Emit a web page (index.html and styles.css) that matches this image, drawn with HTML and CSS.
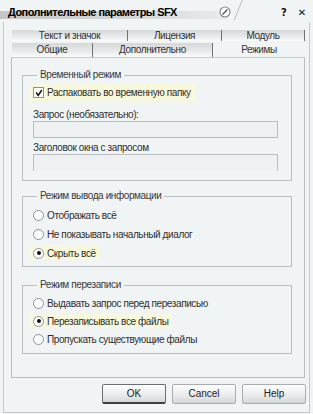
FILE: index.html
```html
<!DOCTYPE html>
<html lang="ru">
<head>
    <meta charset="UTF-8">
    <title>Дополнительные параметры SFX</title>
    <link rel="stylesheet" href="styles.css">
</head>
<body>
    <div class="dialog">
        <div class="titlebar">
            <div class="title">Дополнительные параметры SFX</div>
            <svg class="pin" width="14" height="14" viewBox="0 0 14 14">
                <circle cx="7" cy="7" r="5" fill="#fff" stroke="#8a8a8a" stroke-width="1.2"/>
                <path d="M4.6 9.4 L9.4 4.6" stroke="#555" stroke-width="1.4"/>
            </svg>
            <div class="slash"></div>
            <div class="ctl help">?</div>
            <div class="ctl close">&#x2715;</div>
        </div>

        <div class="frame">
            <div class="tabs">
                <div class="tabrow">
                    <div class="tab" style="width:116px">Текст и значок</div>
                    <div class="tab" style="width:94px">Лицензия</div>
                    <div class="tab" style="width:83px">Модуль</div>
                </div>
                <div class="tabrow">
                    <div class="tab" style="width:81px">Общие</div>
                    <div class="tab" style="width:120px">Дополнительно</div>
                    <div class="tab active" style="width:92px">Режимы</div>
                </div>
            </div>

            <div class="panel">
                <fieldset class="group g1">
                    <legend>Временный режим</legend>
                    <div class="option check-row hl">
                        <span class="check"><svg width="8" height="8" viewBox="0 0 8 8"><path d="M1.2 3.5 L3.2 6.5 L6.8 1" fill="none" stroke="#111" stroke-width="1.5"/></svg></span>
                        Распаковать во временную папку
                    </div>
                    <div class="label first">Запрос (необязательно):</div>
                    <div class="input"></div>
                    <div class="label">Заголовок окна с запросом</div>
                    <div class="input last"></div>
                </fieldset>

                <fieldset class="group g2">
                    <legend>Режим вывода информации</legend>
                    <div class="option"><span class="radio"></span>Отображать всё</div>
                    <div class="option"><span class="radio"></span>Не показывать начальный диалог</div>
                    <div class="option hl"><span class="radio on"></span>Скрыть всё</div>
                </fieldset>

                <fieldset class="group g3">
                    <legend>Режим перезаписи</legend>
                    <div class="option"><span class="radio"></span>Выдавать запрос перед перезаписью</div>
                    <div class="option hl"><span class="radio on"></span>Перезаписывать все файлы</div>
                    <div class="option"><span class="radio"></span>Пропускать существующие файлы</div>
                </fieldset>
            </div>

            <div class="buttons">
                <div class="btn default">OK</div>
                <div class="btn">Cancel</div>
                <div class="btn">Help</div>
            </div>
        </div>
    </div>
</body>
</html>
```

FILE: styles.css
```css
* {
    padding: 0;
    margin: 0;
    box-sizing: border-box;
}
body {
    width: 313px;
    height: 414px;
    background: #f1f4f5;
    font-family: "Liberation Sans", Arial, sans-serif;
    font-size: 10px;
    letter-spacing: -0.4px;
    color: #2e2e2e;
    overflow: hidden;
}
.dialog {
    width: 313px;
    height: 414px;
    display: flex;
    flex-direction: column;
}
.titlebar {
    height: 22px;
    display: flex;
    align-items: flex-start;
    position: relative;
}
.title {
    width: 228px;
    height: 13px;
    margin-top: 6px;
    padding-left: 8px;
    font-size: 11px;
    line-height: 13px;
    font-weight: bold;
    letter-spacing: -0.55px;
    color: #000;
    background: linear-gradient(to right, #c4c6c7 0%, #d3d5d6 55%, #e9ebec 100%) no-repeat left bottom;
    background-size: 100% 8px;
}
.pin {
    position: absolute;
    left: 218px;
    top: 5px;
}
.slash {
    position: absolute;
    left: 238px;
    top: -1px;
    width: 1px;
    height: 21px;
    background: #b9bbbc;
    transform: skewX(-22deg);
}
.ctl {
    font-family: "DejaVu Sans", sans-serif;
    font-weight: bold;
    font-size: 10px;
    line-height: 10px;
    letter-spacing: 0;
    color: #111;
    margin-top: 8px;
}
.help {
    margin-left: 53px;
}
.close {
    margin-left: 11px;
}
.frame {
    flex: 1;
    margin: 0 3px 1px 3px;
    border: 1px solid #c4c8ca;
    border-top: none;
    padding: 8px 4px 0 7px;
    display: flex;
    flex-direction: column;
}
.tabs {
    margin-left: 1px;
}
.tabrow {
    display: flex;
    height: 11px;
    margin-bottom: 2px;
}
.tabrow:last-child {
    height: 14px;
    margin-bottom: 0;
}
.tab {
    text-align: center;
    line-height: 11px;
    color: #333;
    background: linear-gradient(to bottom, #d5d7d8 0%, #e6e8e9 55%, #fbfbfb 100%);
    border-right: 1px solid #6f7274;
}
.tabrow:last-child .tab {
    line-height: 14px;
}
.tab.active {
    background: none;
    border: none;
    line-height: 8px;
}
.panel {
    border: 1px solid #b9bdbf;
    border-top-color: #c8cbcd;
    height: 321px;
    padding: 11px 12px 0 10px;
    display: flex;
    flex-direction: column;
}
.group {
    border: 1px solid #b9bdbf;
    padding: 0 0 0 10px;
    display: flex;
    flex-direction: column;
}
legend {
    margin-left: 4px;
    padding: 0 3px 0 3px;
    color: #3a3a3a;
    line-height: 12px;
}
.g1 {
    height: 112px;
    padding-top: 3px;
}
.g2 {
    height: 77px;
    margin-top: 9px;
    padding-top: 6px;
}
.g3 {
    height: 75px;
    margin-top: 12px;
    padding-top: 5px;
}
.option {
    display: flex;
    align-items: center;
    height: 14px;
    margin-left: -3px;
    padding-left: 3px;
    padding-right: 4px;
    margin-bottom: 4px;
    align-self: flex-start;
}
.g2 .option {
    margin-bottom: 5px;
}
.option.check-row {
    height: 17px;
    margin-bottom: 0;
}
.option.hl {
    background: #f8f9dc;
}
.check {
    width: 11px;
    height: 11px;
    border: 1px solid #8e9294;
    background: #fff;
    display: flex;
    align-items: center;
    justify-content: center;
    margin-right: 3px;
}
.radio {
    width: 11px;
    height: 11px;
    border: 1px solid #8e9294;
    border-radius: 50%;
    background: #fff;
    margin-right: 3px;
    display: flex;
    align-items: center;
    justify-content: center;
}
.radio.on::after {
    content: "";
    width: 4px;
    height: 4px;
    border-radius: 50%;
    background: #111;
}
.label {
    margin-top: 5px;
    height: 10px;
    line-height: 10px;
}
.label.first {
    margin-top: 9px;
}
.input {
    width: 245px;
    height: 17px;
    margin-top: 1px;
    border: 1px solid #b9bdbf;
    background: #eef1f2;
}
.input.last {
    border-bottom: none;
}
.buttons {
    display: flex;
    justify-content: flex-end;
    gap: 6px;
    margin-top: 6px;
    margin-right: -1px;
}
.btn {
    width: 64px;
    height: 20px;
    border: 1px solid #a9adaf;
    border-radius: 2px;
    background: linear-gradient(to bottom, #ffffff 0%, #e8eaeb 60%, #d3d5d6 100%);
    text-align: center;
    line-height: 18px;
    letter-spacing: 0;
    color: #222;
}
.btn.default {
    border: 1px solid #6a6e70;
    border-bottom: 2px solid #3c4042;
}
```
